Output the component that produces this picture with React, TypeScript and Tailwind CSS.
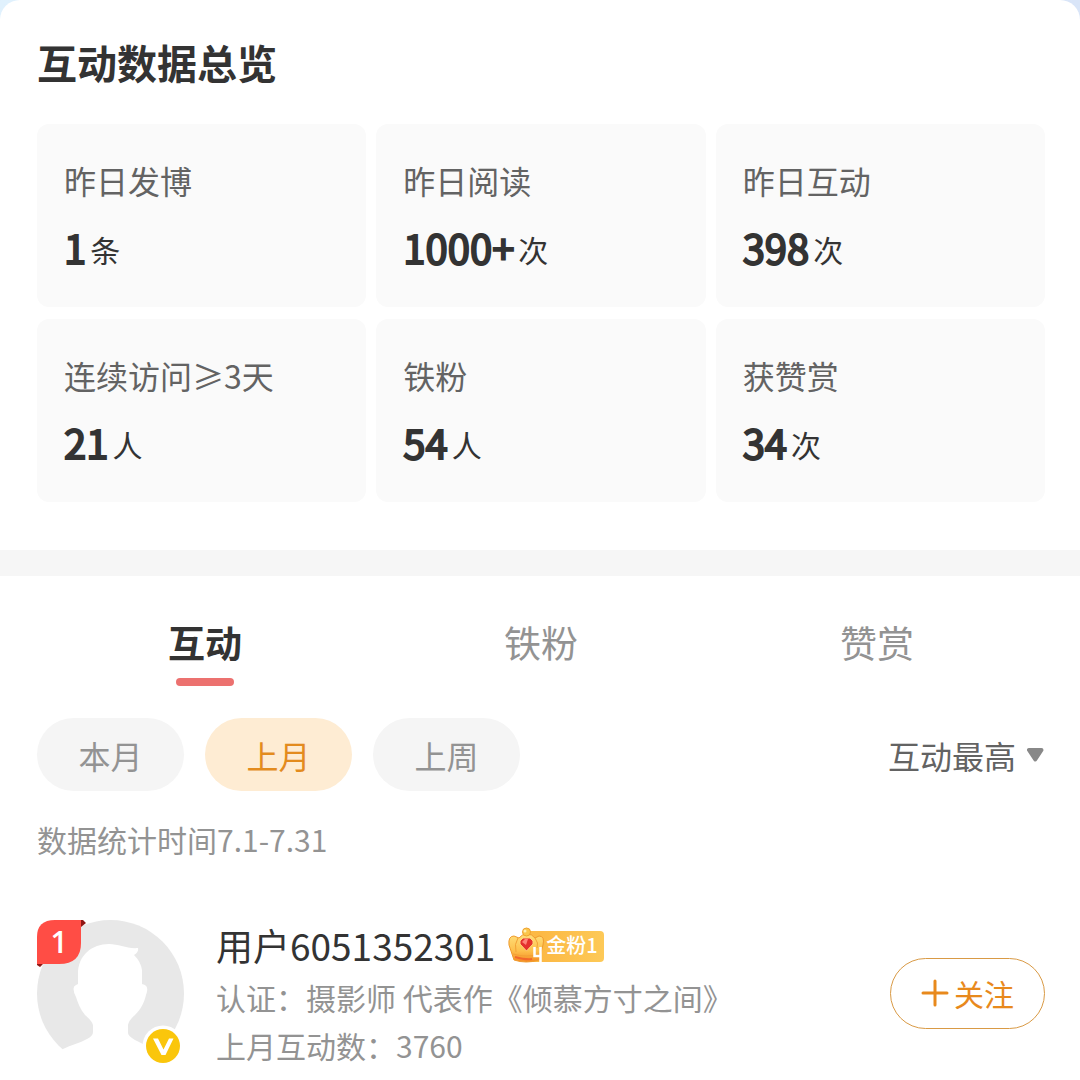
import React, { useState } from 'react';

const stats = [
    { label: '昨日发博', value: '1', unit: '条' },
    { label: '昨日阅读', value: '1000+', unit: '次' },
    { label: '昨日互动', value: '398', unit: '次' },
    { label: '连续访问≥3天', value: '21', unit: '人' },
    { label: '铁粉', value: '54', unit: '人' },
    { label: '获赞赏', value: '34', unit: '次' },
];

const tabs = ['互动', '铁粉', '赞赏'];
const periods = ['本月', '上月', '上周'];

function Overview() {
    return (
        <section className="pt-[34px] pl-[37px] pr-[35px] pb-12">
            <h1 className="text-[40px] leading-[56px] font-bold text-[#333]">互动数据总览</h1>
            <div className="mt-[34px] grid grid-cols-3 gap-x-[10px] gap-y-3">
                {stats.map((item) => (
                    <div key={item.label} className="bg-[#fafafa] rounded-xl px-[27px] pt-8 pb-[30px]">
                        <p className="text-[32px] leading-[48px] text-[#636363]">{item.label}</p>
                        <p className="mt-[13px] flex items-center gap-1 text-[#333]">
                            <span className="text-[40px] leading-[60px] [-webkit-text-stroke:2px_#333]">{item.value}</span>
                            <span className="pt-1 text-[30px] leading-[40px]">{item.unit}</span>
                        </p>
                    </div>
                ))}
            </div>
        </section>
    );
}

function Avatar({ rank }: { rank: number }) {
    return (
        <div className="relative h-[147px] w-[147px] shrink-0">
            <svg viewBox="0 0 147 147" className="h-full w-full">
                <circle cx="73.5" cy="73.5" r="73.5" fill="#e8e8e8" />
                <path
                    d="M26 129 C34 125 43 123 50 119 Q56 116 56 112 V105 Q55 101 48 95 C43 89 41 83 39 77 Q34 67 39 65 L41 64 V54 C41 35 55 24 72 24 C82 24 90 29 101 28 Q102 32 97 35 Q104 42 105 50 V64 L108 65 Q112 67 109 75 C107 83 104 89 98 95 Q92 100 91 105 V113 Q91 116 98 120 L106 124 L120 147 H0 Z"
                    fill="#fff"
                />
                <path d="M44 0 L46 0 L49 3 L44 7 Z M0 42 L6 44 L3 47 L0 45 Z" fill="#8f1714" />
                <path d="M0 17 Q0 0 18 0 H44 V23 Q44 44 22 44 H0 Z" fill="#ff4d45" />
                <circle cx="126" cy="126" r="20.5" fill="#fff" />
                <circle cx="126" cy="126" r="17" fill="#fac60c" />
                <path d="M116 118.500 H121 L126.500 129.500 L132 118.500 H136.500 L128.500 135 H124.500 Z" fill="#fff" />
            </svg>
            <span className="absolute left-0 top-0 w-11 text-center font-['Open_Sans',sans-serif] text-[30px] leading-[44px] font-semibold text-white">
                {rank}
            </span>
        </div>
    );
}

function FanBadge() {
    return (
        <span className="relative flex h-[37px] w-24 items-center">
            <svg viewBox="0 0 96 37" className="absolute inset-0 h-full w-full">
                <defs>
                    <linearGradient id="plate" x1="0" x2="1" y1="0" y2="0">
                        <stop offset="0.2" stopColor="#fcb945" />
                        <stop offset="1" stopColor="#fdc957" />
                    </linearGradient>
                    <linearGradient id="crown" x1="0" x2="0" y1="0" y2="1">
                        <stop offset="0" stopColor="#ffdf7a" />
                        <stop offset="0.6" stopColor="#fdc04c" />
                        <stop offset="1" stopColor="#f58a22" />
                    </linearGradient>
                </defs>
                <rect x="18" y="4" width="78" height="31" rx="4" fill="url(#plate)" />
                <path d="M6 33 L1 18 Q0 9 6 9 L11 11 Q14 7 19 7 Q24 7 27 11 L31 9 Q37 9 35 18 L31 33 Q18 37 6 33 Z" fill="url(#crown)" stroke="#ef9a2d" />
                <path d="M5 27 Q18 31 32 27 M10 11 Q6 17 8 25 M27 11 Q31 16 29 21" fill="none" stroke="#f3a035" />
                <path d="M7 30 Q18 33 24 32" fill="none" stroke="#f2672b" strokeWidth="2" />
                <circle cx="18.500" cy="5" r="4" fill="#fbc64b" stroke="#efa22f" />
                <circle cx="17" cy="4" r="1.500" fill="#fff0b0" />
                <path d="M12 14 L15 11 H22 L25 14 V17 L18.500 24 L12 17 Z" fill="#e4312d" stroke="#ffd27a" />
                <path d="M14 15 L17 12 H20 L18 18 Z" fill="#ff8377" />
                {/* level number, drawn with an open top */}
                <path d="M26.500 20 V29 H33 M32.500 20 V35" fill="none" stroke="#fff" strokeWidth="2.500" />
            </svg>
            <span className="relative pl-[38px] text-[20px] leading-[28px] font-medium text-white whitespace-nowrap">金粉1</span>
        </span>
    );
}

function FanRow() {
    return (
        <li className="flex items-center">
            <Avatar rank={1} />
            <div className="ml-8 min-w-0 flex-1">
                <div className="flex items-center gap-[13px]">
                    <h2 className="text-[37px] leading-[56px] text-[#333]">用户6051352301</h2>
                    <FanBadge />
                </div>
                <p className="text-[30px] leading-[48px] text-[#939393] whitespace-nowrap">认证：摄影师 代表作《倾慕方寸之间》</p>
                <p className="text-[30px] leading-[48px] text-[#939393]">上月互动数：3760</p>
            </div>
            <button className="flex h-[71px] w-[155px] shrink-0 items-center justify-center gap-[5px] rounded-full border border-[#d99a45] text-[30px] text-[#e8891c]">
                <svg viewBox="0 0 28 28" className="h-7 w-7" stroke="currentColor" strokeWidth="3" strokeLinecap="round">
                    <path d="M14 2 V26 M2 14 H26" />
                </svg>
                关注
            </button>
        </li>
    );
}

export default function App() {
    const [tab, setTab] = useState('互动');
    const [period, setPeriod] = useState('上月');

    return (
        <div lang="zh-CN" className="bg-linear-to-r from-[#e0f1fd] to-[#d9e5f8] font-['Noto_Sans_CJK_SC',sans-serif]">
            <main className="rounded-t-[20px] bg-white">
                <Overview />
                <div className="h-[26px] bg-[#f6f6f6]" />
                <section className="pl-[37px] pr-[35px] pt-[39px] pb-2">
                    <nav className="grid grid-cols-3">
                        {tabs.map((name) => (
                            <button key={name} onClick={() => setTab(name)} className="flex flex-col items-center gap-[9px]">
                                <span className={name === tab ? 'text-[37px] leading-[54px] font-bold text-[#333]' : 'text-[37px] leading-[54px] text-[#939393]'}>
                                    {name}
                                </span>
                                {name === tab && <span className="h-2 w-[58px] rounded-full bg-[#ec716f]" />}
                            </button>
                        ))}
                    </nav>
                    <div className="mt-8 flex items-center justify-between">
                        <div className="flex gap-[21px]">
                            {periods.map((name) => (
                                <button
                                    key={name}
                                    onClick={() => setPeriod(name)}
                                    className={
                                        name === period
                                            ? 'h-[73px] w-[147px] rounded-full bg-[#feecd3] text-[32px] text-[#e38b1e]'
                                            : 'h-[73px] w-[147px] rounded-full bg-[#f5f5f5] text-[32px] text-[#939393]'
                                    }
                                >
                                    {name}
                                </button>
                            ))}
                        </div>
                        <div className="flex items-center gap-[10px]">
                            <select aria-label="排序" className="appearance-none bg-transparent text-[32px] text-[#636363] focus:outline-none">
                                <option>互动最高</option>
                                <option>互动最低</option>
                            </select>
                            <svg viewBox="0 0 18 16" className="h-4 w-[18px]">
                                <path d="M2 3 H14.500 L8.250 12.500 Z" fill="#888" stroke="#888" strokeWidth="4" strokeLinejoin="round" />
                            </svg>
                        </div>
                    </div>
                    <p className="mt-[26px] text-[30px] leading-[44px] text-[#939393]">数据统计时间7.1-7.31</p>
                    <ul className="mt-14">
                        <FanRow />
                    </ul>
                </section>
            </main>
        </div>
    );
}
